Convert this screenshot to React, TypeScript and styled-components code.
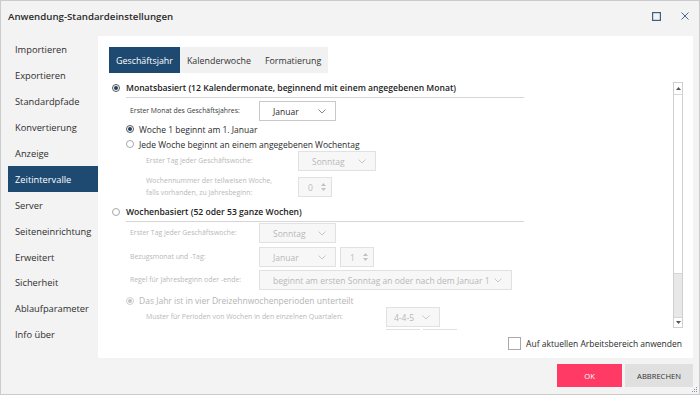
import React from 'react';
import styled, { createGlobalStyle } from 'styled-components';

const GlobalStyle = createGlobalStyle`
    html, body {
        margin: 0;
        padding: 0;
        background: #ffffff;
    }
    body {
        font-family: "Open Sans", "Noto Sans", sans-serif;
        color: #222;
    }
    * {
        box-sizing: border-box;
    }
`;

const Window = styled.div`
    width: 700px;
    height: 395px;
    border: 1px solid #cbcbcb;
    background: #f3f3f3;
    display: flex;
    flex-direction: column;
    position: relative;
`;

const TitleBar = styled.div`
    height: 35px;
    padding: 0 10px 5px 7px;
    display: flex;
    align-items: center;
    justify-content: space-between;
`;

const Title = styled.div`
    font-size: 9.7px;
    font-weight: 600;
    color: #2b2b2b;
`;

const WindowButtons = styled.div`
    display: flex;
    align-items: center;
    gap: 20px;
`;

const Body = styled.div`
    flex: 1;
    display: flex;
    min-height: 0;
`;

const Sidebar = styled.nav`
    width: 97px;
    padding-top: 1px;
    display: flex;
    flex-direction: column;
`;

const NavItem = styled.div<{ $active?: boolean }>`
    height: 25.9px;
    margin-left: 7px;
    padding-left: 7px;
    display: flex;
    align-items: center;
    font-size: 9.3px;
    color: ${(p) => (p.$active ? '#ffffff' : '#2e2e2e')};
    background: ${(p) => (p.$active ? '#1e4a72' : 'transparent')};
`;

const Panel = styled.main`
    flex: 1;
    margin-right: 6px;
    background: #ffffff;
    padding: 11px 10px 0 11px;
    display: flex;
    flex-direction: column;
`;

const Tabs = styled.div`
    display: flex;
    align-self: flex-start;
    background: #f1f1f1;
    height: 26px;
`;

const Tab = styled.div<{ $active?: boolean }>`
    padding: 0 7px;
    display: flex;
    align-items: center;
    font-size: 8.9px;
    color: ${(p) => (p.$active ? '#ffffff' : '#333')};
    background: ${(p) => (p.$active ? '#1e4a72' : 'transparent')};
`;

const ScrollArea = styled.div`
    margin-top: 7px;
    height: 250px;
    display: flex;
    overflow: hidden;
    flex: none;
`;

const Content = styled.div`
    flex: 1;
    padding-left: 3px;
    display: flex;
    flex-direction: column;
    overflow: hidden;

    & > * {
        flex: none;
    }
`;

const SectionHead = styled.div<{ $top?: number }>`
    height: 16px;
    margin-top: ${(p) => p.$top ?? 0}px;
    display: flex;
    align-items: center;
    gap: 6px;
    font-size: 8.6px;
    font-weight: 600;
    color: #222;
`;

const Rule = styled.div`
    margin: 1px 0 0 14px;
    width: 398px;
    border-top: 1px solid #d6d6d6;
`;

const RadioRow = styled.div<{ $top?: number; $disabled?: boolean; $h?: number }>`
    height: ${(p) => p.$h ?? 14}px;
    margin-top: ${(p) => p.$top ?? 0}px;
    margin-left: 14px;
    display: flex;
    align-items: center;
    gap: 5px;
    font-size: 8.5px;
    color: ${(p) => (p.$disabled ? '#b4b4b4' : '#2a2a2a')};
`;

const RadioCircle = styled.span<{ $checked?: boolean; $disabled?: boolean }>`
    width: 8px;
    height: 8px;
    border-radius: 50%;
    flex: none;
    border: 1px solid ${(p) => (p.$disabled ? '#cfcfcf' : p.$checked ? '#555' : '#a8a8a8')};
    background: #fff;
    display: flex;
    align-items: center;
    justify-content: center;

    &::after {
        content: '';
        width: 4px;
        height: 4px;
        border-radius: 50%;
        background: ${(p) => (p.$checked ? (p.$disabled ? '#c4c4c4' : '#1e3f66') : 'transparent')};
    }
`;

const FieldRow = styled.div<{ $top?: number; $indent: number }>`
    height: 20px;
    margin-top: ${(p) => p.$top ?? 0}px;
    margin-left: ${(p) => p.$indent}px;
    display: flex;
    align-items: center;
`;

const FieldLabel = styled.div<{ $width: number; $disabled?: boolean }>`
    width: ${(p) => p.$width}px;
    font-size: 6.9px;
    line-height: 12px;
    color: ${(p) => (p.$disabled ? '#b8b8b8' : '#3a3a3a')};
    flex: none;
`;

const Select = styled.div<{ $width: number; $disabled?: boolean; $pad?: number }>`
    width: ${(p) => p.$width}px;
    height: 20px;
    padding: 0 9px 0 ${(p) => p.$pad ?? 13}px;
    display: flex;
    align-items: center;
    justify-content: space-between;
    border: 1px solid ${(p) => (p.$disabled ? '#e1e1e1' : '#c9c9c9')};
    background: ${(p) => (p.$disabled ? '#f7f7f7' : '#ffffff')};
    color: ${(p) => (p.$disabled ? '#b8b8b8' : '#2a2a2a')};
    font-size: 8.5px;
    flex: none;
`;

const Spin = styled.div<{ $gap?: number }>`
    width: 34px;
    height: 20px;
    margin-left: ${(p) => p.$gap ?? 0}px;
    padding: 0 5px 0 9px;
    display: flex;
    align-items: center;
    justify-content: space-between;
    border: 1px solid #e1e1e1;
    background: #f7f7f7;
    color: #bcbcbc;
    font-size: 8.5px;
    flex: none;
`;

const SpinArrows = styled.div`
    display: flex;
    flex-direction: column;
    gap: 2px;
`;

const ScrollBar = styled.div`
    width: 10px;
    margin-top: 2px;
    height: 246px;
    border: 1px solid #cfcfcf;
    display: flex;
    flex-direction: column;
    flex: none;
`;

const ScrollButton = styled.div<{ $h: number }>`
    height: ${(p) => p.$h}px;
    display: flex;
    align-items: center;
    justify-content: center;
    background: #fff;
    flex: none;
`;

const Thumb = styled.div`
    height: 180px;
    border-top: 1px solid #d6d6d6;
    border-bottom: 1px solid #d6d6d6;
    background: #fff;
`;

const Track = styled.div`
    flex: 1;
    background: #e8e8e8;
    border-bottom: 1px solid #d6d6d6;
`;

const ApplyRow = styled.label`
    margin-top: 7px;
    padding-right: 1px;
    align-self: flex-end;
    display: flex;
    align-items: center;
    gap: 5px;
    font-size: 8.5px;
    color: #2a2a2a;
`;

const CheckBox = styled.span`
    width: 13px;
    height: 13px;
    border: 1px solid #a9a9a9;
    background: #fff;
`;

const Footer = styled.footer`
    height: 36px;
    padding: 6px 6px 0 0;
    display: flex;
    justify-content: flex-end;
    align-items: flex-start;
    gap: 3px;
`;

const Button = styled.button<{ $primary?: boolean }>`
    height: 23px;
    width: ${(p) => (p.$primary ? 65 : 68)}px;
    border: none;
    font-family: inherit;
    font-size: 7.6px;
    color: ${(p) => (p.$primary ? '#ffffff' : '#333333')};
    background: ${(p) => (p.$primary ? '#ff3a64' : '#e0e0e0')};
`;

const Grip = styled.svg`
    position: absolute;
    right: 1px;
    bottom: 1px;
`;

const Chevron = ({ color }: { color: string }) => (
    <svg width="8" height="5" viewBox="0 0 8 5">
        <polyline points="0.5,0.5 4,4 7.5,0.5" fill="none" stroke={color} strokeWidth="0.9" />
    </svg>
);

const Tri = ({ up, color }: { up?: boolean; color: string }) => (
    <svg width="5" height="3" viewBox="0 0 5 3">
        <polygon points={up ? '0,3 2.5,0 5,3' : '0,0 5,0 2.5,3'} fill={color} />
    </svg>
);

const navItems = [
    'Importieren',
    'Exportieren',
    'Standardpfade',
    'Konvertierung',
    'Anzeige',
    'Zeitintervalle',
    'Server',
    'Seiteneinrichtung',
    'Erweitert',
    'Sicherheit',
    'Ablaufparameter',
    'Info über',
];

const App: React.FC = () => {
    const dis = '#c2c2c2';
    return (
        <>
            <GlobalStyle />
            <Window>
                <TitleBar>
                    <Title>Anwendung-Standardeinstellungen</Title>
                    <WindowButtons>
                        <svg width="9" height="9" viewBox="0 0 9 9">
                            <rect x="0.6" y="0.6" width="7.8" height="7.8" fill="none" stroke="#3f5f86" strokeWidth="1.2" />
                        </svg>
                        <svg width="8" height="8" viewBox="0 0 8 8">
                            <path d="M0.5 0.5 L7.5 7.5 M7.5 0.5 L0.5 7.5" stroke="#4a6488" strokeWidth="1" />
                        </svg>
                    </WindowButtons>
                </TitleBar>
                <Body>
                    <Sidebar>
                        {navItems.map((n) => (
                            <NavItem key={n} $active={n === 'Zeitintervalle'}>
                                {n}
                            </NavItem>
                        ))}
                    </Sidebar>
                    <Panel>
                        <Tabs>
                            <Tab $active>Geschäftsjahr</Tab>
                            <Tab>Kalenderwoche</Tab>
                            <Tab>Formatierung</Tab>
                        </Tabs>
                        <ScrollArea>
                            <Content>
                                <SectionHead>
                                    <RadioCircle $checked />
                                    Monatsbasiert (12 Kalendermonate, beginnend mit einem angegebenen Monat)
                                </SectionHead>
                                <Rule />
                                <FieldRow $top={3} $indent={18}>
                                    <FieldLabel $width={129}>Erster Monat des Geschäftsjahres:</FieldLabel>
                                    <Select $width={77}>
                                        Januar
                                        <Chevron color="#777" />
                                    </Select>
                                </FieldRow>
                                <RadioRow $top={1}>
                                    <RadioCircle $checked />
                                    Woche 1 beginnt am 1. Januar
                                </RadioRow>
                                <RadioRow $top={1}>
                                    <RadioCircle />
                                    Jede Woche beginnt an einem angegebenen Wochentag
                                </RadioRow>
                                <FieldRow $indent={34}>
                                    <FieldLabel $width={152} $disabled>
                                        Erster Tag jeder Geschäftswoche:
                                    </FieldLabel>
                                    <Select $width={78} $disabled>
                                        Sonntag
                                        <Chevron color={dis} />
                                    </Select>
                                </FieldRow>
                                <FieldRow $top={6} $indent={34}>
                                    <FieldLabel $width={152} $disabled>
                                        Wochennummer der teilweisen Woche,
                                        <br />
                                        falls vorhanden, zu Jahresbeginn:
                                    </FieldLabel>
                                    <Spin>
                                        0
                                        <SpinArrows>
                                            <Tri up color={dis} />
                                            <Tri color={dis} />
                                        </SpinArrows>
                                    </Spin>
                                </FieldRow>
                                <SectionHead $top={7}>
                                    <RadioCircle />
                                    Wochenbasiert (52 oder 53 ganze Wochen)
                                </SectionHead>
                                <Rule />
                                <FieldRow $top={1} $indent={18}>
                                    <FieldLabel $width={129} $disabled>
                                        Erster Tag jeder Geschäftswoche:
                                    </FieldLabel>
                                    <Select $width={77} $disabled>
                                        Sonntag
                                        <Chevron color={dis} />
                                    </Select>
                                </FieldRow>
                                <FieldRow $top={4} $indent={18}>
                                    <FieldLabel $width={129} $disabled>
                                        Bezugsmonat und -Tag:
                                    </FieldLabel>
                                    <Select $width={77} $disabled>
                                        Januar
                                        <Chevron color={dis} />
                                    </Select>
                                    <Spin $gap={4}>
                                        1
                                        <SpinArrows>
                                            <Tri up color={dis} />
                                            <Tri color={dis} />
                                        </SpinArrows>
                                    </Spin>
                                </FieldRow>
                                <FieldRow $top={3} $indent={18}>
                                    <FieldLabel $width={129} $disabled>
                                        Regel für Jahresbeginn oder -ende:
                                    </FieldLabel>
                                    <Select $width={253} $disabled>
                                        beginnt am ersten Sonntag an oder nach dem Januar 1
                                        <Chevron color={dis} />
                                    </Select>
                                </FieldRow>
                                <RadioRow $top={4} $h={13} $disabled>
                                    <RadioCircle $checked $disabled />
                                    Das Jahr ist in vier Dreizehnwochenperioden unterteilt
                                </RadioRow>
                                <FieldRow $indent={34}>
                                    <FieldLabel $width={240} $disabled>
                                        Muster für Perioden von Wochen in den einzelnen Quartalen:
                                    </FieldLabel>
                                    <Select $width={54} $pad={7} $disabled>
                                        4-4-5
                                        <Chevron color={dis} />
                                    </Select>
                                </FieldRow>
                                <FieldRow $top={2} $indent={274}>
                                    <Select $width={34} $disabled />
                                    <Spin $gap={3} />
                                </FieldRow>
                            </Content>
                            <ScrollBar>
                                <ScrollButton $h={11}>
                                    <Tri up color="#555" />
                                </ScrollButton>
                                <Thumb />
                                <Track />
                                <ScrollButton $h={9}>
                                    <Tri color="#555" />
                                </ScrollButton>
                            </ScrollBar>
                        </ScrollArea>
                        <ApplyRow>
                            <CheckBox />
                            Auf aktuellen Arbeitsbereich anwenden
                        </ApplyRow>
                    </Panel>
                </Body>
                <Footer>
                    <Button $primary>OK</Button>
                    <Button>ABBRECHEN</Button>
                </Footer>
                <Grip width="7" height="7" viewBox="0 0 7 7">
                    <g fill="#7f95b0">
                        <rect x="5" y="1" width="1" height="1" />
                        <rect x="3" y="3" width="1" height="1" />
                        <rect x="5" y="3" width="1" height="1" />
                        <rect x="1" y="5" width="1" height="1" />
                        <rect x="3" y="5" width="1" height="1" />
                        <rect x="5" y="5" width="1" height="1" />
                    </g>
                </Grip>
            </Window>
        </>
    );
};

export default App;
